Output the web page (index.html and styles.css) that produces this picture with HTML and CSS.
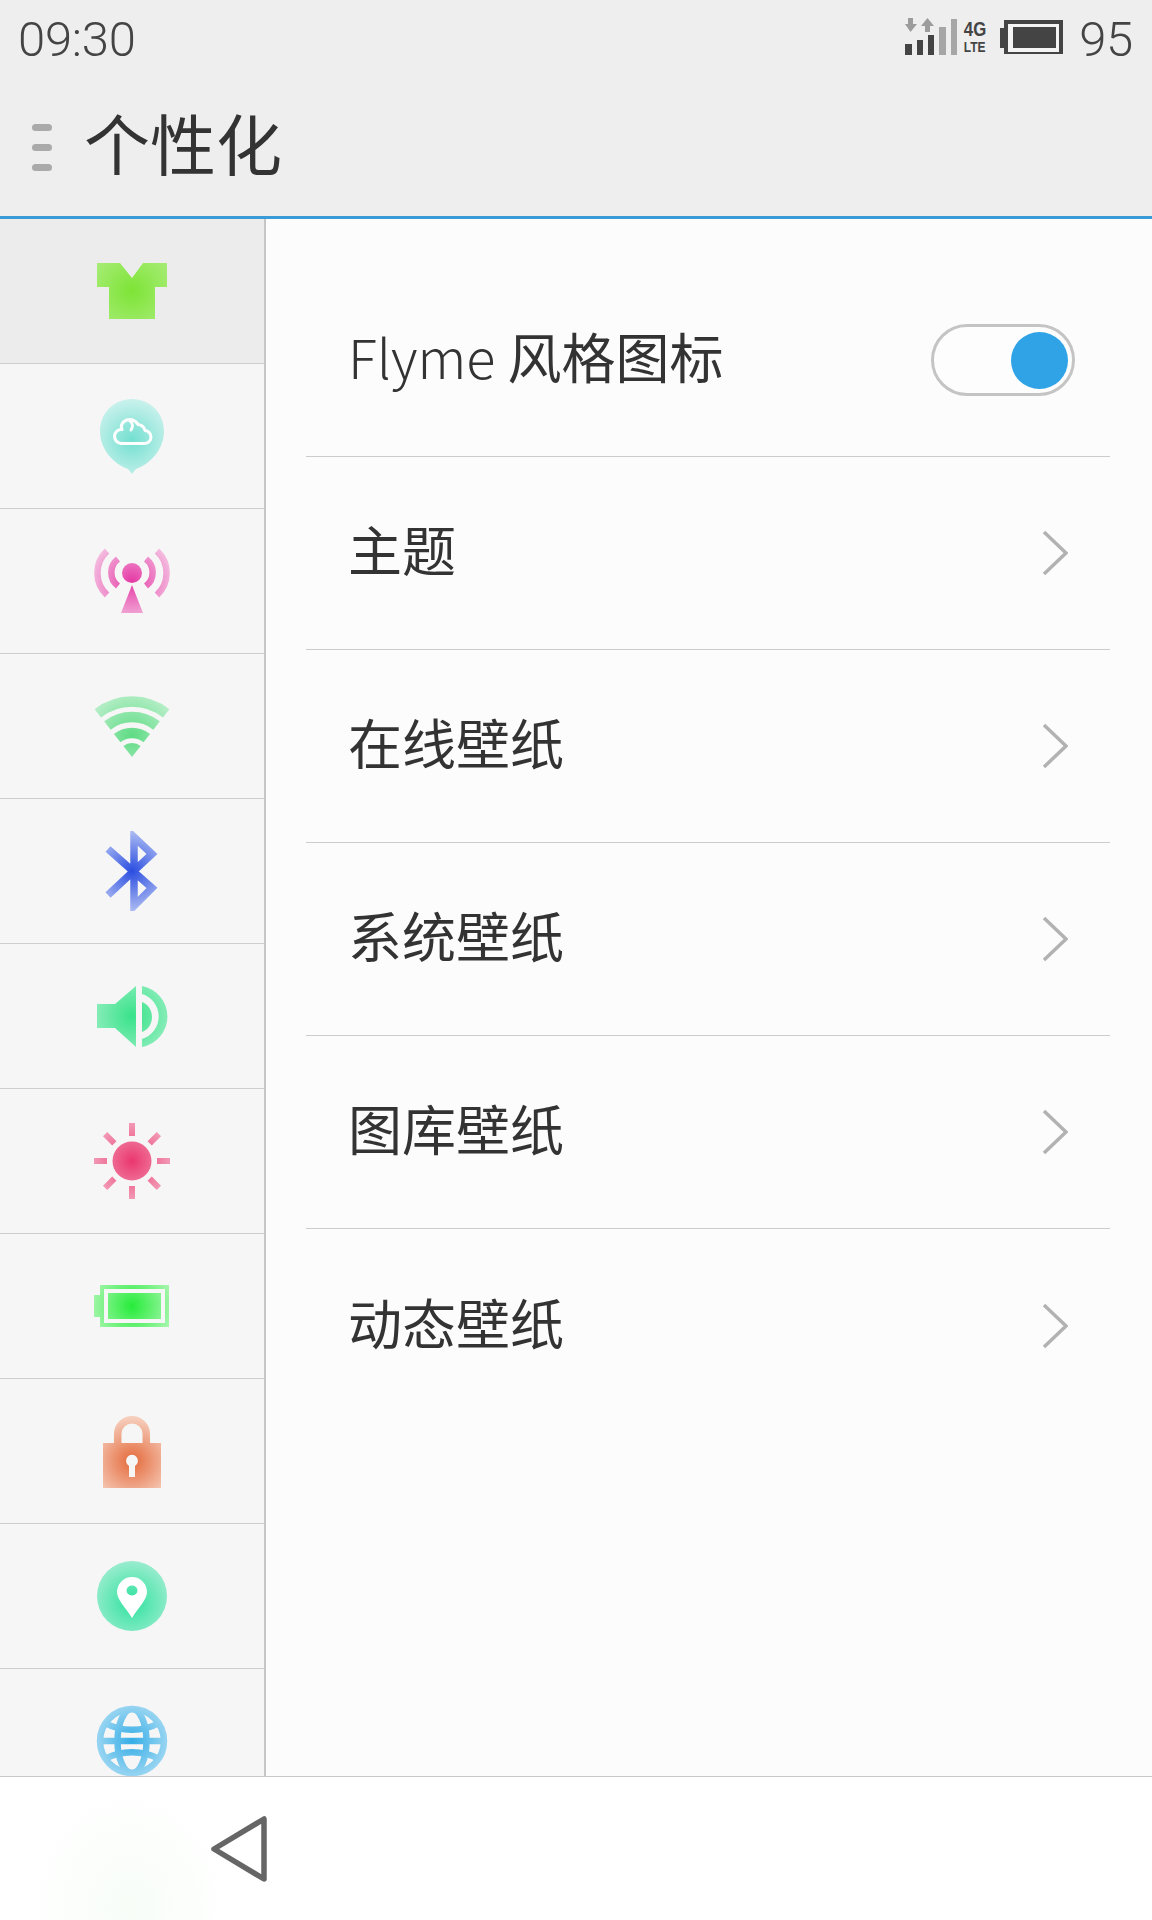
FILE: index.html
```html
<!DOCTYPE html>
<html lang="zh-CN">
<head>
<meta charset="utf-8">
<title>个性化</title>
<link rel="stylesheet" href="styles.css">
</head>
<body>
<svg class="defs" width="0" height="0" aria-hidden="true">
  <defs>
    <radialGradient id="g-shirt" gradientUnits="userSpaceOnUse" cx="40" cy="40" r="46"><stop offset="0" stop-color="#7de435"/><stop offset="1" stop-color="#a8ec78"/></radialGradient>
    <radialGradient id="g-cloud" gradientUnits="userSpaceOnUse" cx="40" cy="44" r="40"><stop offset="0" stop-color="#72dfd0"/><stop offset="1" stop-color="#c8f1ec"/></radialGradient>
    <radialGradient id="g-pink" gradientUnits="userSpaceOnUse" cx="40" cy="40" r="48"><stop offset="0" stop-color="#e53aa5"/><stop offset="1" stop-color="#f6d0e8"/></radialGradient>
    <radialGradient id="g-wifi" gradientUnits="userSpaceOnUse" cx="40" cy="50" r="52"><stop offset="0" stop-color="#5edb84"/><stop offset="1" stop-color="#c4f1d2"/></radialGradient>
    <radialGradient id="g-bt" gradientUnits="userSpaceOnUse" cx="40" cy="40" r="46"><stop offset="0" stop-color="#2a4de0"/><stop offset="1" stop-color="#c0ccf5"/></radialGradient>
    <radialGradient id="g-sound" gradientUnits="userSpaceOnUse" cx="40" cy="40" r="52"><stop offset="0" stop-color="#38e28a"/><stop offset="1" stop-color="#a8f1cb"/></radialGradient>
    <radialGradient id="g-sun" gradientUnits="userSpaceOnUse" cx="40" cy="40" r="42"><stop offset="0" stop-color="#ea376e"/><stop offset="1" stop-color="#f3a3bc"/></radialGradient>
    <radialGradient id="g-batt" gradientUnits="userSpaceOnUse" cx="40" cy="40" r="44"><stop offset="0" stop-color="#26ec3a"/><stop offset="1" stop-color="#aef6b4"/></radialGradient>
    <radialGradient id="g-lock" gradientUnits="userSpaceOnUse" cx="40" cy="50" r="46"><stop offset="0" stop-color="#e4693a"/><stop offset="1" stop-color="#f7d4c4"/></radialGradient>
    <radialGradient id="g-pin" gradientUnits="userSpaceOnUse" cx="40" cy="46" r="40"><stop offset="0" stop-color="#2fe29f"/><stop offset="1" stop-color="#97eccd"/></radialGradient>
    <radialGradient id="g-globe" gradientUnits="userSpaceOnUse" cx="40" cy="40" r="40"><stop offset="0" stop-color="#35ade6"/><stop offset="1" stop-color="#a5daf3"/></radialGradient>
  </defs>
</svg>
<div class="phone">
  <header class="top">
    <div class="status">
      <span class="time">09:30</span>
      <div class="status-right">
        <svg class="signal" width="54" height="38" viewBox="0 0 54 38">
          <path class="arrow" d="M3 0h5v6h4l-6.500 8L0 6h3z"/>
          <path class="arrow" d="M20 14h5V8h4l-6.500-8L16 8h4z"/>
          <rect class="bar-on" x="0" y="26" width="7" height="11"/>
          <rect class="bar-on" x="12" y="22" width="6" height="15"/>
          <rect class="bar-on" x="23" y="17" width="6" height="20"/>
          <rect class="bar-off" x="34" y="9" width="7" height="28"/>
          <rect class="bar-off" x="46" y="1" width="6" height="36"/>
        </svg>
        <div class="net"><span class="net-big">4G</span><span class="net-small">LTE</span></div>
        <svg class="battery" width="63" height="34" viewBox="0 0 63 34">
          <path class="batt-fill" d="M4 0h59v34H4v-6H0V8h4z"/>
          <rect class="batt-ring" x="8" y="4" width="51" height="28"/>
          <rect class="batt-fill" x="13" y="7" width="43" height="21"/>
        </svg>
        <span class="level">95</span>
      </div>
    </div>
    <div class="titlebar">
      <div class="menu"><i></i><i></i><i></i></div>
      <h1 class="title">个性化</h1>
    </div>
  </header>

  <main class="body">
    <nav class="side">
      <div class="tab tab-active">
        <svg class="tab-icon" viewBox="0 0 80 80"><path fill="url(#g-shirt)" d="M5 12h23l12 15 11-15h24v24H63v32H17V36H5z"/></svg>
      </div>
      <div class="tab">
        <svg class="tab-icon" viewBox="0 0 80 80">
          <path fill="url(#g-cloud)" d="M40 3c18 0 32 14 32 32 0 19-14 33-28 38l-4 5-4-5C22 68 8 54 8 35 8 17 22 3 40 3z"/>
          <path class="cloud-line" d="M29 47.500h23a6.500 6.500 0 0 0 1-13 8 8 0 0 0-7-6 9.500 9.500 0 0 0-14-3 7 7 0 0 0-2 8 7 7 0 0 0-1 14zM38 25c3 2 3 6 1 9"/>
        </svg>
      </div>
      <div class="tab">
        <svg class="tab-icon" viewBox="0 0 80 80">
          <g class="wave"><path d="M26 18a17 17 0 0 0 0 27M54 18a17 17 0 0 1 0 27"/><path d="M15 10a30 30 0 0 0 0 44M65 10a30 30 0 0 1 0 44"/></g>
          <circle fill="url(#g-pink)" cx="40" cy="32" r="10"/>
          <path fill="url(#g-pink)" d="M40 44l11 28H29z"/>
        </svg>
      </div>
      <div class="tab">
        <svg class="tab-icon" viewBox="0 0 80 80">
          <g class="wifi"><path d="M5.800 27.300A55.500 55.500 0 0 1 74.200 27.300"/><path d="M15.400 39.500A40 40 0 0 1 64.600 39.500"/><path d="M25.200 52.100A24 24 0 0 1 54.800 52.100"/></g>
          <path fill="url(#g-wifi)" d="M40 71l-8.600-11a14 14 0 0 1 17.200 0z"/>
        </svg>
      </div>
      <div class="tab">
        <svg class="tab-icon" viewBox="0 0 80 80"><path class="bt" d="M16 18l44 39-18 18V6l18 17-44 41"/></svg>
      </div>
      <div class="tab">
        <svg class="tab-icon" viewBox="0 0 80 80">
          <path fill="url(#g-sound)" d="M5 28h18l21-18v61L23 52H5zM50 10a31 31 0 0 1 0 61v-8a23.500 23.500 0 0 0 0-45zM50 26c6 2 10 8 10 15s-4 13-10 15z"/>
        </svg>
      </div>
      <div class="tab">
        <svg class="tab-icon" viewBox="0 0 80 80">
          <g class="rays"><rect class="ray" x="37" y="2" width="6" height="13"/><rect class="ray ray-45" x="37" y="2" width="6" height="13"/><rect class="ray ray-90" x="37" y="2" width="6" height="13"/><rect class="ray ray-135" x="37" y="2" width="6" height="13"/><rect class="ray ray-180" x="37" y="2" width="6" height="13"/><rect class="ray ray-225" x="37" y="2" width="6" height="13"/><rect class="ray ray-270" x="37" y="2" width="6" height="13"/><rect class="ray ray-315" x="37" y="2" width="6" height="13"/></g>
          <circle fill="url(#g-sun)" cx="40" cy="40" r="19.500"/>
        </svg>
      </div>
      <div class="tab">
        <svg class="tab-icon" viewBox="0 0 80 80">
          <path fill="url(#g-batt)" d="M8 19h69v42H8v-10H2V29h6zM12 23v34h61V23z" fill-rule="evenodd"/>
          <rect fill="url(#g-batt)" x="16" y="27" width="53" height="26"/>
        </svg>
      </div>
      <div class="tab">
        <svg class="tab-icon" viewBox="0 0 80 80">
          <path class="shackle" d="M25.700 33V23a14.300 14.300 0 0 1 28.600 0v10"/>
          <path fill="url(#g-lock)" fill-rule="evenodd" d="M11 32h58v45H11zM37 55v11h6V55a6 6 0 1 0-6 0z"/>
        </svg>
      </div>
      <div class="tab">
        <svg class="tab-icon" viewBox="0 0 80 80">
          <circle fill="url(#g-pin)" cx="40" cy="40" r="35"/>
          <path class="pin-head" fill-rule="evenodd" d="M40 62C34 52 25 44 25 36a15 15 0 0 1 30 0c0 8-9 16-15 26zM40 29.500a5.500 5 0 1 0 0 10 5.500 5 0 0 0 0-10z"/>
        </svg>
      </div>
      <div class="tab">
        <svg class="tab-icon" viewBox="0 0 80 80">
          <g class="globe"><circle cx="40" cy="40" r="32"/><ellipse cx="40" cy="40" rx="14.500" ry="32"/><path d="M7 40h66M13 22c16 9 38 9 54 0M13 58c16-9 38-9 54 0"/></g>
        </svg>
      </div>
    </nav>

    <section class="list">
      <div class="row">
        <span class="label"><span class="latin">Flyme</span> 风格图标</span>
        <div class="toggle"><i class="knob"></i></div>
      </div>
      <div class="row"><span class="label">主题</span><svg class="chev" width="26" height="46" viewBox="0 0 26 46"><path d="M2 2l22 21L2 44"/></svg></div>
      <div class="row"><span class="label">在线壁纸</span><svg class="chev" width="26" height="46" viewBox="0 0 26 46"><path d="M2 2l22 21L2 44"/></svg></div>
      <div class="row"><span class="label">系统壁纸</span><svg class="chev" width="26" height="46" viewBox="0 0 26 46"><path d="M2 2l22 21L2 44"/></svg></div>
      <div class="row"><span class="label">图库壁纸</span><svg class="chev" width="26" height="46" viewBox="0 0 26 46"><path d="M2 2l22 21L2 44"/></svg></div>
      <div class="row row-last"><span class="label">动态壁纸</span><svg class="chev" width="26" height="46" viewBox="0 0 26 46"><path d="M2 2l22 21L2 44"/></svg></div>
    </section>
  </main>

  <footer class="nav">
    <svg class="back" width="60" height="70" viewBox="0 0 60 70"><path d="M5 35L55 5v60z"/></svg>
  </footer>
</div>
</body>
</html>
```
FILE: styles.css
```css
* { box-sizing: border-box; }
html, body { margin: 0; padding: 0; }
body { font-family: "Noto Sans CJK SC", "Noto Sans", sans-serif; color: #333; }
.defs { display: block; width: 0; height: 0; overflow: hidden; }
.phone { width: 1152px; height: 1920px; display: flex; flex-direction: column; overflow: hidden; }

.top { background: #eeeeee; border-bottom: 3px solid #3a9bd9; height: 219px; flex: none; }
.status { height: 80px; display: flex; justify-content: space-between; align-items: flex-start; padding: 12px 19px 0 18px; }
.time, .level { font-family: Roboto, sans-serif; font-weight: 300; font-size: 49px; line-height: 56px; color: #444; letter-spacing: -0.3px; }
.status-right { display: flex; align-items: flex-start; }
.signal { margin-top: 6px; }
.arrow { fill: #9c9c9c; }
.bar-on { fill: #444; }
.bar-off { fill: #a6a6a6; }
.net { display: flex; flex-direction: column; align-items: center; width: 23px; margin-left: 4px; margin-top: 6px; font-family: "Liberation Sans", sans-serif; font-weight: 700; color: #444; }
.net-big { font-size: 21px; line-height: 21px; transform: scaleX(0.8); }
.net-small { font-size: 15px; line-height: 16px; transform: scaleX(0.8); }
.battery { margin-left: 14px; margin-top: 8px; }
.batt-fill { fill: #444; }
.batt-ring { fill: #f4f4f4; }
.level { margin-left: 16px; }

.titlebar { height: 136px; display: flex; align-items: center; padding: 0 0 2px 32px; }
.menu { width: 20px; display: flex; flex-direction: column; gap: 13px; }
.menu i { display: block; height: 7px; border-radius: 4px; background: #aaaaaa; }
.title { margin: 0 0 13px 32px; font-weight: 400; font-size: 66px; line-height: 80px; color: #333; }

.body { flex: 1; min-height: 0; display: flex; background: #fcfcfc; }
.side { width: 266px; flex: none; overflow: hidden; background: #f6f6f6; border-right: 2px solid #c6c6c6; }
.tab { height: 145px; display: flex; align-items: center; justify-content: center; border-bottom: 1px solid #cdcdcd; flex: none; }
.tab-active { background: #ececec; }
.tab-icon { width: 80px; height: 80px; display: block; }
.cloud-line { fill: none; stroke: #fff; stroke-width: 3; stroke-linejoin: round; stroke-linecap: round; }
.wave { fill: none; stroke: url(#g-pink); stroke-width: 6.500; }
.wifi { fill: none; stroke: url(#g-wifi); stroke-width: 10.500; }
.bt { fill: none; stroke: url(#g-bt); stroke-width: 7.500; stroke-linejoin: miter; }
.rays { fill: url(#g-sun); }
.ray { transform-origin: 40px 40px; }
.ray-45 { transform: rotate(45deg); }
.ray-90 { transform: rotate(90deg); }
.ray-135 { transform: rotate(135deg); }
.ray-180 { transform: rotate(180deg); }
.ray-225 { transform: rotate(225deg); }
.ray-270 { transform: rotate(270deg); }
.ray-315 { transform: rotate(315deg); }
.shackle { fill: none; stroke: url(#g-lock); stroke-width: 7.500; }
.pin-head { fill: #fff; }
.globe { fill: none; stroke: url(#g-globe); stroke-width: 6.500; }

.list { flex: 1; min-width: 0; padding: 45px 42px 0 40px; }
.row { height: 193px; display: flex; align-items: center; justify-content: space-between; padding-left: 42px; border-bottom: 1px solid #cccccc; }
.row-last { border-bottom: none; }
.label { font-size: 54px; line-height: 70px; padding-bottom: 8px; color: #333; font-weight: 400; }
.latin { font-weight: 300; }
.toggle { width: 144px; height: 72px; margin-right: 35px; padding: 0 4px; border: 3px solid #c4c4c4; border-radius: 36px; background: #fdfdfd; display: flex; align-items: center; justify-content: flex-end; }
.knob { display: block; width: 57px; height: 57px; border-radius: 50%; background: #2fa3e6; }
.chev { margin-right: 42px; }
.chev path { fill: none; stroke: #b2b2b2; stroke-width: 3.500; }

.nav { height: 144px; flex: none; background: radial-gradient(ellipse 110px 130px at 130px 130px, #f8fdf8 0%, #ffffff 100%); border-top: 1px solid #c8c8c8; display: flex; align-items: center; padding-left: 209px; }
.back { display: block; }
.back path { fill: none; stroke: #666; stroke-width: 5.500; stroke-linejoin: round; }
```
